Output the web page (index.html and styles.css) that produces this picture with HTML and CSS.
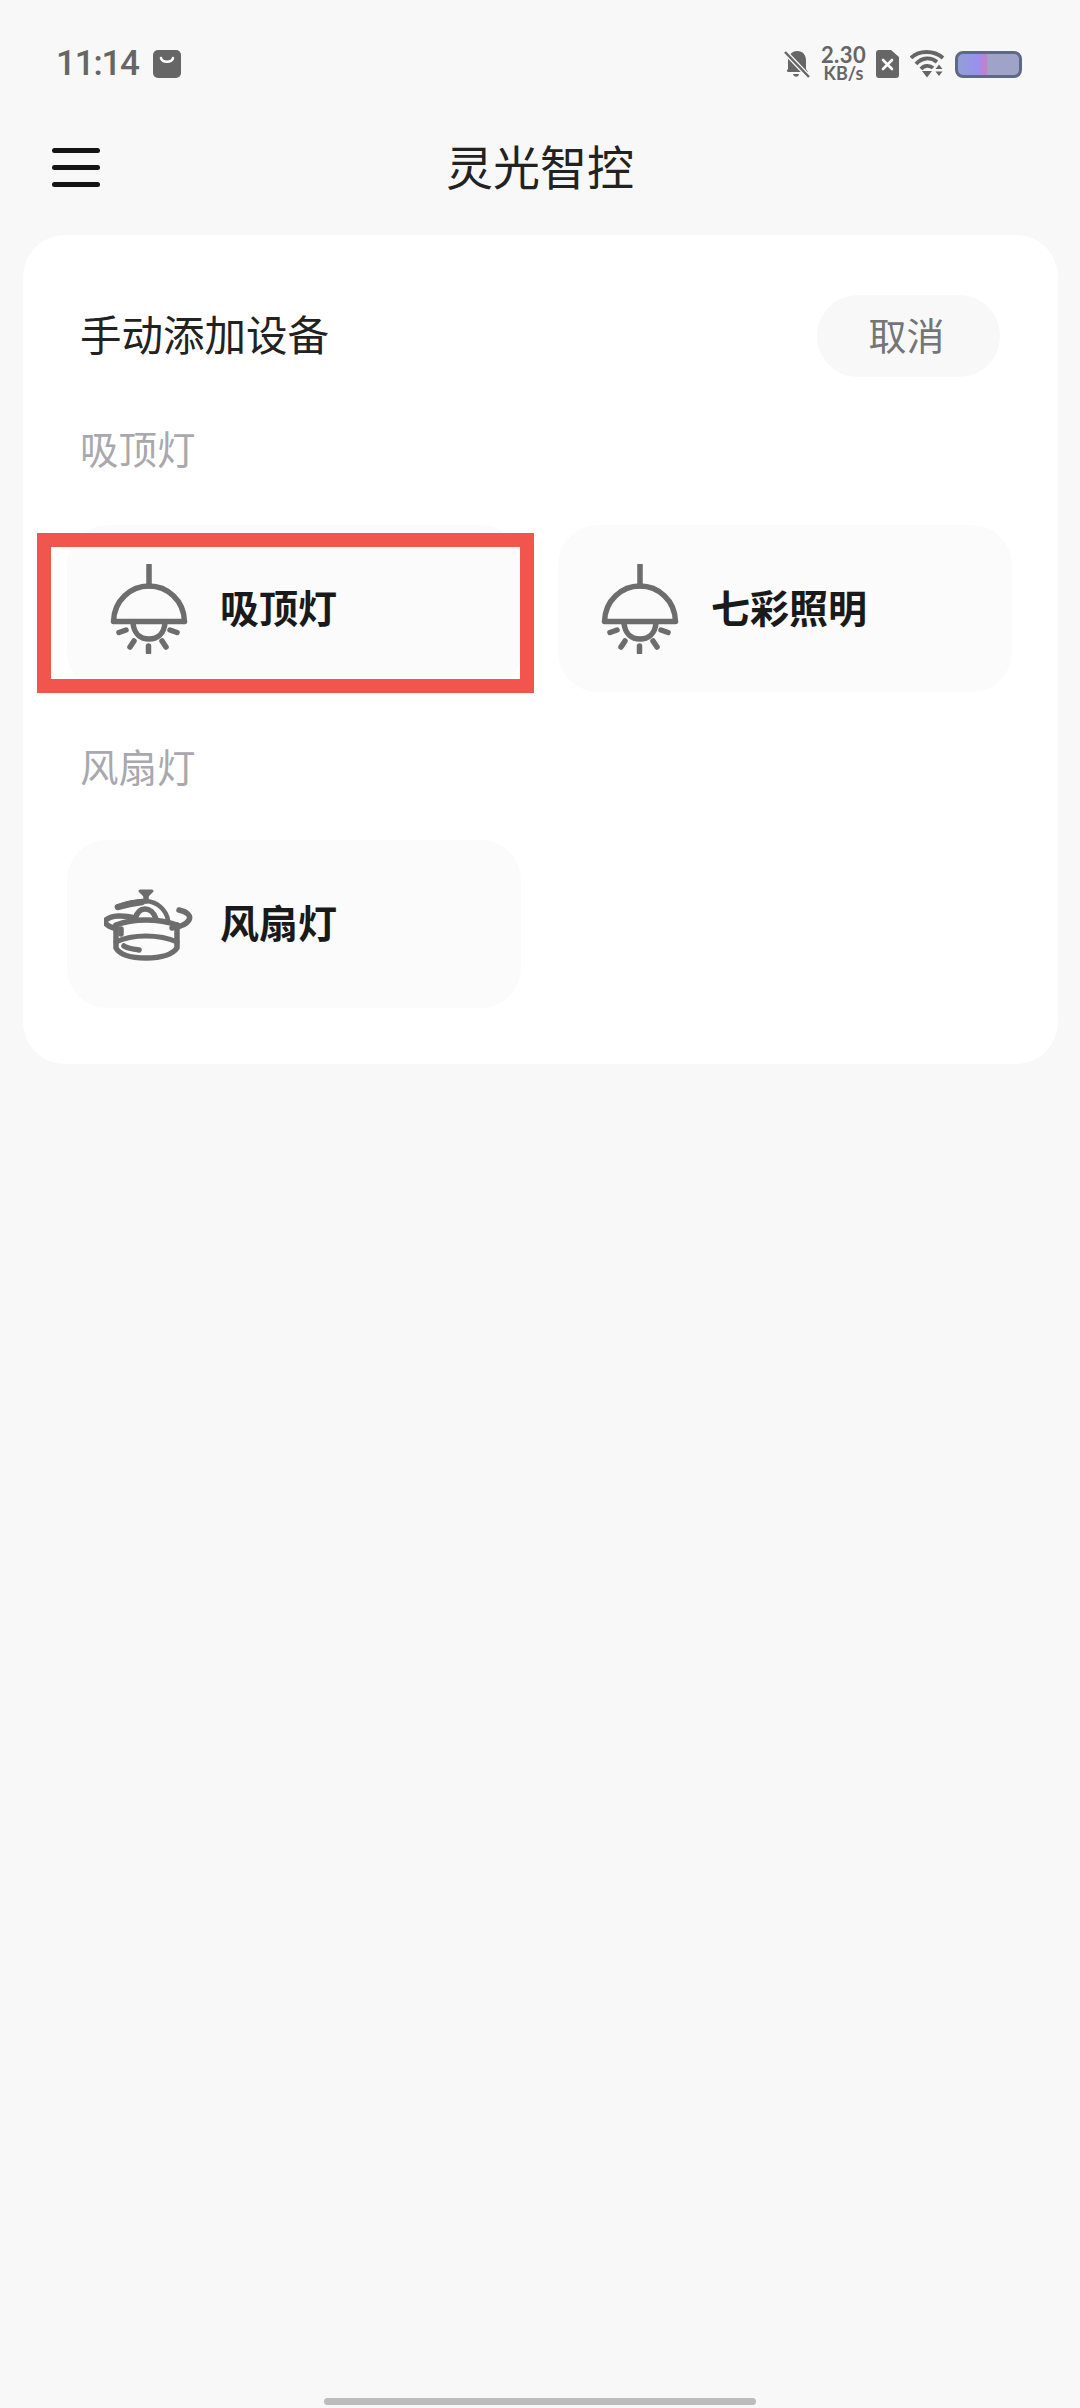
FILE: index.html
```html
<!DOCTYPE html>
<html lang="zh-CN">
<head>
<meta charset="utf-8">
<title>灵光智控</title>
<link rel="stylesheet" href="styles.css">
</head>
<body>
<svg class="defs" width="0" height="0" aria-hidden="true">
  <symbol id="lamp" viewBox="0 0 90 90">
    <g fill="none" stroke="#6d6d6d" stroke-width="5.500" stroke-linecap="round" stroke-linejoin="round">
      <path d="M45 1V22"/>
      <path d="M9.500 57.500C10 36 27 22 45 22S80 36 80.500 57.500Z"/>
      <path d="M29 59C30 70 37 75 45 75S60 70 61 59"/>
      <path d="M15 68.500L22 66"/>
      <path d="M66 66L73 68.500"/>
      <path d="M26 83L30 77"/>
      <path d="M58 77L62 83"/>
      <path d="M44.500 82V88.500"/>
    </g>
  </symbol>
  <symbol id="fan" viewBox="0 0 90 90">
    <g fill="none" stroke="#6d6d6d" stroke-width="5.500" stroke-linecap="round" stroke-linejoin="round">
      <path d="M36 12H48L42 18Z" fill="#6d6d6d" stroke-width="3"/>
      <path d="M42 18V22"/>
      <path d="M13 28C22 24 32 22 42 22C54 23 62 31 64 41" stroke-width="4.500"/>
      <path d="M14 28C24 25 30 24 38 23" stroke-width="6.500"/>
      <path d="M31 40C33 33 37 30 41 30S50 33 52 40"/>
      <path d="M10 49C3 47 0 44 2 41C7 36 20 36 31 39"/>
      <path d="M75 31C84 33 87 37 85 41C82 46 75 48 68 49"/>
      <path d="M12 47V69C16 76 28 79 42 79S68 76 73 69V46"/>
      <path d="M12 46C22 42 32 41 42 41S62 42 73 46"/>
      <path d="M12 63C22 58 32 57 42 57S62 58 73 63" stroke-width="5"/>
      <path d="M20 67C25 70 30 70 35 71"/>
      <path d="M17 50V55"/>
    </g>
  </symbol>
</svg>

<div class="screen">
  <header class="status">
    <div class="status-left">
      <span class="time">11:14</span>
      <svg class="bag" viewBox="0 0 28 28" aria-hidden="true">
        <rect width="28" height="28" rx="5" fill="#666"/>
        <path d="M8 8C9 13 19 13 20 8" fill="none" stroke="#fff" stroke-width="2.600" stroke-linecap="round"/>
      </svg>
    </div>
    <div class="status-right">
      <svg class="bell" viewBox="0 0 26 28" aria-hidden="true">
        <path d="M13 1C19 1 22 5 22 11V19L24 22H5C3 22 2 21 4 19V9C5 4 9 1 13 1Z" fill="#666"/>
        <path d="M9 24H15C15 27 10 28 9 24Z" fill="#666"/>
        <path d="M1 2L25 27" stroke="#fafafa" stroke-width="5"/>
        <path d="M1 2L25 27" stroke="#666" stroke-width="2.500"/>
      </svg>
      <div class="speed"><span class="speed-num">2.30</span><span class="speed-unit">KB/s</span></div>
      <svg class="sim" viewBox="0 0 23 28" aria-hidden="true">
        <path d="M3 0H15L23 7V25C23 27 22 28 20 28H3C1 28 0 27 0 25V3C0 1 1 0 3 0Z" fill="#666"/>
        <path d="M7 10L16 19M16 10L7 19" stroke="#fff" stroke-width="2.600" stroke-linecap="round"/>
      </svg>
      <svg class="wifi" viewBox="0 0 35 28" aria-hidden="true">
        <g fill="none" stroke="#666" stroke-width="3.800">
          <path d="M1 8C9 0 24 0 33 8"/>
          <path d="M6 14C12 7 21 7 27 12"/>
          <path d="M11 19C14 15 20 15 23 18"/>
        </g>
        <path d="M12 21H22L17 27.500Z" fill="#666"/>
        <path d="M29 14.500L32.500 19H25.500ZM25.500 21.500H32.500L29 26Z" fill="#666"/>
      </svg>
      <div class="battery"></div>
    </div>
  </header>

  <nav class="nav">
    <div class="menu"><span class="menu-line"></span><span class="menu-line"></span><span class="menu-line"></span></div>
    <h1 class="title">灵光智控</h1>
  </nav>

  <main class="card">
    <div class="card-head">
      <h2 class="card-title">手动添加设备</h2>
      <button class="cancel">取消</button>
    </div>

    <div class="section-label">吸顶灯</div>
    <div class="device-grid">
      <div class="device device-marked">
        <svg class="device-icon"><use href="#lamp"/></svg>
        <span class="device-name">吸顶灯</span>
      </div>
      <div class="device">
        <svg class="device-icon"><use href="#lamp"/></svg>
        <span class="device-name">七彩照明</span>
      </div>
    </div>

    <div class="section-label">风扇灯</div>
    <div class="device-grid device-grid-last">
      <div class="device device-tall">
        <svg class="device-icon"><use href="#fan"/></svg>
        <span class="device-name">风扇灯</span>
      </div>
    </div>
  </main>

  <div class="home-bar"></div>
</div>
</body>
</html>
```

FILE: styles.css
```css
* { box-sizing: border-box; }

html, body {
  margin: 0;
  padding: 0;
  background: #f8f8f8;
}

.defs { position: absolute; }

.screen {
  width: 1080px;
  height: 2408px;
  display: flex;
  flex-direction: column;
  background: #f8f8f8;
  font-family: "Noto Sans CJK SC", "Noto Sans", sans-serif;
  overflow: hidden;
}

/* status bar */
.status {
  height: 128px;
  flex: none;
  display: flex;
  justify-content: space-between;
  align-items: center;
  padding: 0 58px 0 56px;
}

.status-left {
  display: flex;
  align-items: center;
  gap: 14px;
}

.time {
  font-family: Roboto, sans-serif;
  font-weight: 500;
  font-size: 35px;
  line-height: 36px;
  letter-spacing: -1.2px;
  color: #666;
}

.bag { width: 28px; height: 28px; }

.status-right {
  display: flex;
  align-items: center;
}

.bell { width: 26px; height: 28px; margin-right: 11px; }

.speed {
  width: 45px;
  display: flex;
  flex-direction: column;
  align-items: center;
  font-family: Lato, sans-serif;
  font-weight: 700;
  color: #666;
  margin-top: -1px;
  margin-right: 10px;
}

.speed-num { font-size: 22px; line-height: 19px; letter-spacing: 0.4px; }
.speed-unit { font-size: 18px; line-height: 18px; }

.sim { width: 23px; height: 28px; margin-right: 11px; }
.wifi { width: 35px; height: 28px; margin-right: 10px; }

.battery {
  width: 67px;
  height: 27px;
  border: 3px solid #5e6985;
  border-radius: 8px;
  background: linear-gradient(90deg, #929fd6 0, #9a90ee 34%, #c080d2 42%, #bb84cc 46%, #9fa3c8 50%, #9fa3c8 100%);
}

/* title bar */
.nav {
  height: 82px;
  flex: none;
  margin-bottom: 25px;
  padding: 0 52px;
  display: grid;
  grid-template-columns: 1fr auto 1fr;
  align-items: center;
}

.menu {
  display: flex;
  flex-direction: column;
  gap: 12px;
  margin-top: -4px;
}

.menu-line {
  width: 48px;
  height: 5px;
  border-radius: 3px;
  background: #141414;
}

.title {
  margin: 0;
  font-size: 47px;
  line-height: 60px;
  font-weight: 400;
  color: #222;
  padding-bottom: 8px;
}

/* card */
.card {
  flex: none;
  margin: 0 22px 0 23px;
  padding: 60px 46px 56px 44px;
  background: #fff;
  border-radius: 42px;
}

.card-head {
  display: flex;
  justify-content: space-between;
  align-items: center;
  padding: 0 12px 0 13px;
  margin-bottom: 48px;
}

.card-title {
  margin: 0;
  font-size: 41.500px;
  line-height: 60px;
  font-weight: 400;
  color: #222;
  padding-bottom: 6px;
}

.cancel {
  width: 183px;
  height: 82px;
  border: 0;
  border-radius: 41px;
  background: #f8f8f8;
  font-family: inherit;
  font-size: 38px;
  color: #757575;
  padding: 0 4px 6px 0;
}

.section-label {
  padding: 0 0 6px 13px;
  font-size: 38.500px;
  line-height: 44px;
  color: #a8a8ae;
  margin-bottom: 50px;
}

.device-grid {
  display: grid;
  grid-template-columns: 1fr 1fr;
  gap: 37px;
  margin-bottom: 51px;
}

.device-grid-last { margin-bottom: 0; margin-top: -3px; }

.device {
  position: relative;
  height: 167px;
  display: flex;
  align-items: center;
  gap: 26px;
  padding-left: 37px;
  background: #fbfbfb;
  border-radius: 40px;
}

.device-tall { height: 168px; }

/* annotation rectangle drawn over the first device */
.device-marked::after {
  content: "";
  position: absolute;
  left: -30px;
  right: -13px;
  top: 8px;
  bottom: -1px;
  border: 14px solid #f2544e;
}

.device-icon { width: 90px; height: 90px; flex: none; }

.device-name {
  font-size: 39px;
  line-height: 50px;
  font-weight: 700;
  color: #1a1a1a;
  padding-bottom: 6px;
}

/* gesture bar */
.home-bar {
  width: 432px;
  height: 7px;
  border-radius: 4px;
  background: #bcbcbc;
  margin: auto auto 3px;
}
```
